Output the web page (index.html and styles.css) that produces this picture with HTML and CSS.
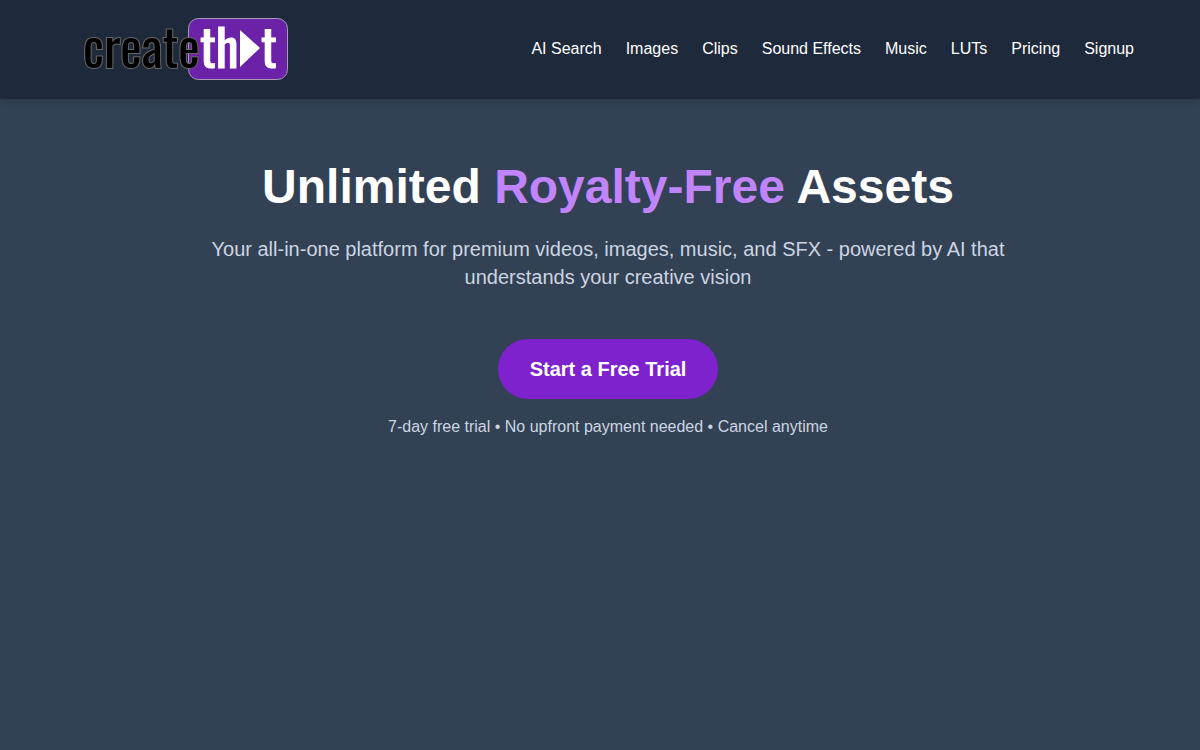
FILE: index.html
```
<!DOCTYPE html>
<html lang="en">
<head>
    <meta charset="UTF-8">
    <meta name="viewport" content="width=device-width, initial-scale=1.0">
    <title>CreateThat</title>
    <link rel="stylesheet" href="styles.css">
</head>
<body>

<header class="header">
    <a href="#" class="logo" aria-label="createthat home">
        <svg width="208" height="66" viewBox="0 0 208 66">
            <rect class="logo-box" x="106.5" y="2.5" width="99" height="61" rx="10"/>
            <text class="logo-create" x="1" y="52" font-size="51">create</text>
            <text class="logo-that" x="118" y="52" font-size="51">th</text>
            <path class="logo-play" d="M158 14 L178 32 L158 51 Z"/>
            <text class="logo-that" x="179" y="52" font-size="51">t</text>
        </svg>
    </a>
    <nav class="nav">
        <a href="#search">AI Search</a>
        <a href="#images">Images</a>
        <a href="#clips">Clips</a>
        <a href="#sfx">Sound Effects</a>
        <a href="#music">Music</a>
        <a href="#luts">LUTs</a>
        <a href="#pricing">Pricing</a>
        <a href="#signup">Signup</a>
    </nav>
</header>

<main class="hero">
    <h1>Unlimited <span class="highlight">Royalty-Free</span> Assets</h1>
    <p class="subtitle">Your all-in-one platform for premium videos, images, music, and SFX - powered by AI that understands your creative vision</p>
    <button type="button" class="trial-button">Start a Free Trial</button>
    <p class="note">7-day free trial • No upfront payment needed • Cancel anytime</p>
</main>

</body>
</html>
```
FILE: styles.css
```
* {
    box-sizing: border-box;
}

body {
    margin: 0;
    font-family: "Liberation Sans", Arial, sans-serif;
    font-size: 16px;
    line-height: 24px;
    color: #fff;
    background-color: #334155;
}

/* Header */
.header {
    display: flex;
    align-items: center;
    justify-content: space-between;
    padding: 16px 66px 17px 82px;
    background-color: #1e293b;
    box-shadow: 0 4px 6px -1px rgba(0, 0, 0, 0.1), 0 2px 4px -2px rgba(0, 0, 0, 0.1);
}

.logo svg {
    display: block;
    overflow: visible;
}

.logo text {
    font-family: "Liberation Sans Narrow", "Oswald", "DejaVu Sans Condensed", sans-serif;
}

.logo-box {
    fill: #6b21a8;
    stroke: #a79bb5;
    stroke-width: 1;
}

/* outline sits behind the fill so the letters stay solid */
.logo-create {
    fill: #000;
    stroke: #666;
    stroke-width: 2;
    paint-order: stroke;
}

.logo-that {
    fill: #fff;
    stroke: #fff;
    stroke-width: 1;
}

.logo-play {
    fill: #fff;
}

.nav {
    display: flex;
    gap: 24px;
}

.nav a {
    color: #fff;
    text-decoration: none;
}

.nav a:hover {
    color: #c084fc;
}

/* Hero */
.hero {
    display: flex;
    flex-direction: column;
    align-items: center;
    padding: 64px 16px 64px 32px;
    text-align: center;
}

.hero h1 {
    margin: 0 0 24px;
    font-size: 48px;
    line-height: 48px;
}

.highlight {
    color: #c084fc;
}

.subtitle {
    max-width: 896px;
    margin: 0 0 48px;
    font-size: 20px;
    line-height: 28px;
    color: #cbd5e1;
}

.trial-button {
    padding: 16px 32px;
    border: none;
    border-radius: 30px;
    background-color: #7e22ce;
    color: #fff;
    font-family: inherit;
    font-size: 20px;
    font-weight: bold;
    line-height: 28px;
    cursor: pointer;
}

.trial-button:hover {
    background-color: #9333ea;
}

.note {
    margin: 16px 0 0;
    color: #cbd5e1;
}
```
